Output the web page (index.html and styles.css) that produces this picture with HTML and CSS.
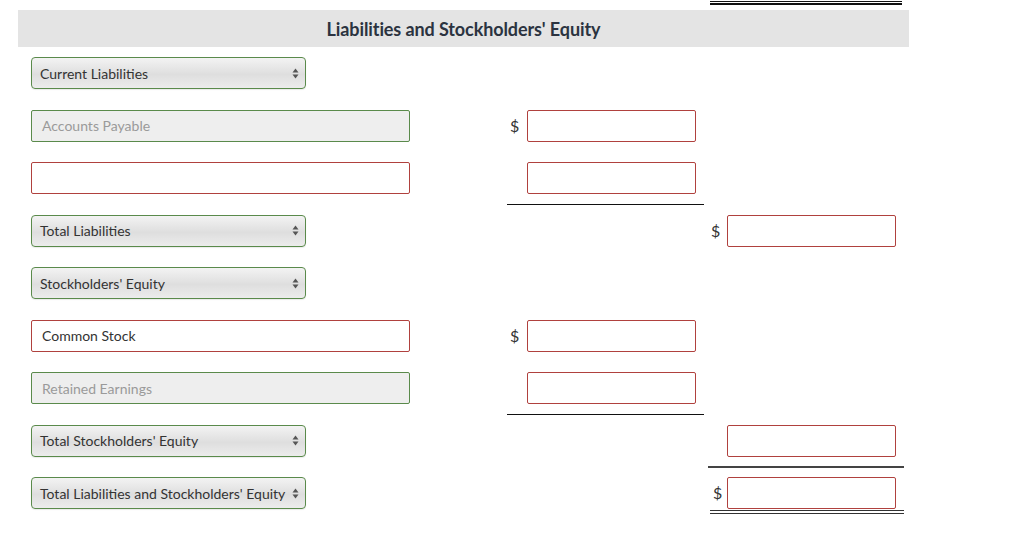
FILE: index.html
```html
<!DOCTYPE html>
<html>
<head>
<meta charset="utf-8">
<link rel="stylesheet" href="styles.css">
</head>
<body>
<div class="page">
  <div class="top-strip"><div class="prev-total"></div></div>
  <div class="header">Liabilities and Stockholders' Equity</div>
  <div class="rows">
    <div class="row">
      <div class="label"><div class="select"><span>Current Liabilities</span><svg class="arr" width="7" height="11" viewBox="0 0 7 11"><path d="M3.5 0.5 L6.5 4.5 L0.5 4.5 Z M3.5 10.5 L6.5 6.5 L0.5 6.5 Z" fill="#555"/></svg></div></div>
      <div class="amt"></div>
      <div class="tot"></div>
    </div>
    <div class="row">
      <div class="label"><div class="field filled muted">Accounts Payable</div></div>
      <div class="amt"><span class="cur">$</span><div class="box"></div></div>
      <div class="tot"></div>
    </div>
    <div class="row">
      <div class="label"><div class="field"></div></div>
      <div class="amt"><div class="line-wrap"><span class="cur"></span><div class="box"></div></div></div>
      <div class="tot"></div>
    </div>
    <div class="row">
      <div class="label"><div class="select"><span>Total Liabilities</span><svg class="arr" width="7" height="11" viewBox="0 0 7 11"><path d="M3.5 0.5 L6.5 4.5 L0.5 4.5 Z M3.5 10.5 L6.5 6.5 L0.5 6.5 Z" fill="#555"/></svg></div></div>
      <div class="amt"></div>
      <div class="tot"><span class="cur">$</span><div class="box"></div></div>
    </div>
    <div class="row">
      <div class="label"><div class="select"><span>Stockholders' Equity</span><svg class="arr" width="7" height="11" viewBox="0 0 7 11"><path d="M3.5 0.5 L6.5 4.5 L0.5 4.5 Z M3.5 10.5 L6.5 6.5 L0.5 6.5 Z" fill="#555"/></svg></div></div>
      <div class="amt"></div>
      <div class="tot"></div>
    </div>
    <div class="row">
      <div class="label"><div class="field">Common Stock</div></div>
      <div class="amt"><span class="cur">$</span><div class="box"></div></div>
      <div class="tot"></div>
    </div>
    <div class="row">
      <div class="label"><div class="field filled muted">Retained Earnings</div></div>
      <div class="amt"><div class="line-wrap"><span class="cur"></span><div class="box"></div></div></div>
      <div class="tot"></div>
    </div>
    <div class="row">
      <div class="label"><div class="select"><span>Total Stockholders' Equity</span><svg class="arr" width="7" height="11" viewBox="0 0 7 11"><path d="M3.5 0.5 L6.5 4.5 L0.5 4.5 Z M3.5 10.5 L6.5 6.5 L0.5 6.5 Z" fill="#555"/></svg></div></div>
      <div class="amt"></div>
      <div class="tot"><div class="line-wrap gray"><span class="cur"></span><div class="box"></div></div></div>
    </div>
    <div class="row">
      <div class="label"><div class="select"><span>Total Liabilities and Stockholders' Equity</span><svg class="arr" width="7" height="11" viewBox="0 0 7 11"><path d="M3.5 0.5 L6.5 4.5 L0.5 4.5 Z M3.5 10.5 L6.5 6.5 L0.5 6.5 Z" fill="#555"/></svg></div></div>
      <div class="amt"></div>
      <div class="tot"><div class="dbl-wrap"><span class="cur">$</span><div class="box"></div></div></div>
    </div>
  </div>
</div>
</body>
</html>
```
FILE: styles.css
```css
* { box-sizing: border-box; }
body {
  margin: 0;
  background: #fff;
  font-family: Lato, "Open Sans", sans-serif;
  color: #333;
}
.page {
  width: 1024px;
  padding-left: 18px;
}
.top-strip {
  height: 10px;
  padding-left: 692px;
  padding-top: 1px;
}
.prev-total {
  width: 192px;
  height: 4px;
  border-top: 1px solid #111;
  border-bottom: 2px solid #111;
}
.header {
  width: 891px;
  height: 37px;
  background: #e4e4e4;
  display: flex;
  align-items: center;
  justify-content: center;
  font-weight: 700;
  font-size: 18px;
  letter-spacing: -0.1px;
  color: #2b3340;
}
.rows {
  padding-top: 10px;
  padding-left: 13px;
}
.row {
  height: 52.5px;
  display: flex;
  align-items: flex-start;
}
.label {
  width: 476px;
}
.amt {
  width: 197px;
  margin-right: 4px;
}
.tot {
  width: 196px;
}
.amt, .tot, .line-wrap, .dbl-wrap {
  display: flex;
  align-items: center;
}
.line-wrap {
  width: 100%;
  padding-bottom: 10px;
  border-bottom: 1px solid #111;
}
.line-wrap.gray {
  border-bottom: 2px solid #444;
  padding-bottom: 9px;
}
.dbl-wrap {
  padding-bottom: 1px;
  border-bottom: 4px double #333;
  margin-left: 2px;
  width: 194px;
}
.cur {
  width: 20px;
  padding-left: 3px;
  font-size: 16px;
  color: #333;
  line-height: 32px;
}
.tot .cur { width: 19px; }
.tot .dbl-wrap .cur { width: 17px; }
.box {
  width: 169px;
  height: 32px;
  border: 1px solid #b0413e;
  border-radius: 2px;
  background: #fff;
}
.select {
  width: 275px;
  height: 32px;
  border: 1px solid #5a8a4b;
  border-radius: 4px;
  background: linear-gradient(#f3f3f3, #dedede 55%, #ececec);
  display: flex;
  align-items: center;
  justify-content: space-between;
  padding: 0 6px 0 8px;
  font-size: 14px;
  color: #333;
  box-shadow: 0 1px 1px rgba(0,0,0,0.08);
}
.arr { display: block; }
.field {
  width: 379px;
  height: 32px;
  border: 1px solid #b0413e;
  border-radius: 2px;
  background: #fff;
  display: flex;
  align-items: center;
  padding-left: 10px;
  font-size: 14px;
  color: #333;
}
.field.filled {
  background: #eeeeee;
  border-color: #5a8a4b;
}
.field.muted {
  color: #9a9a9a;
}
```
